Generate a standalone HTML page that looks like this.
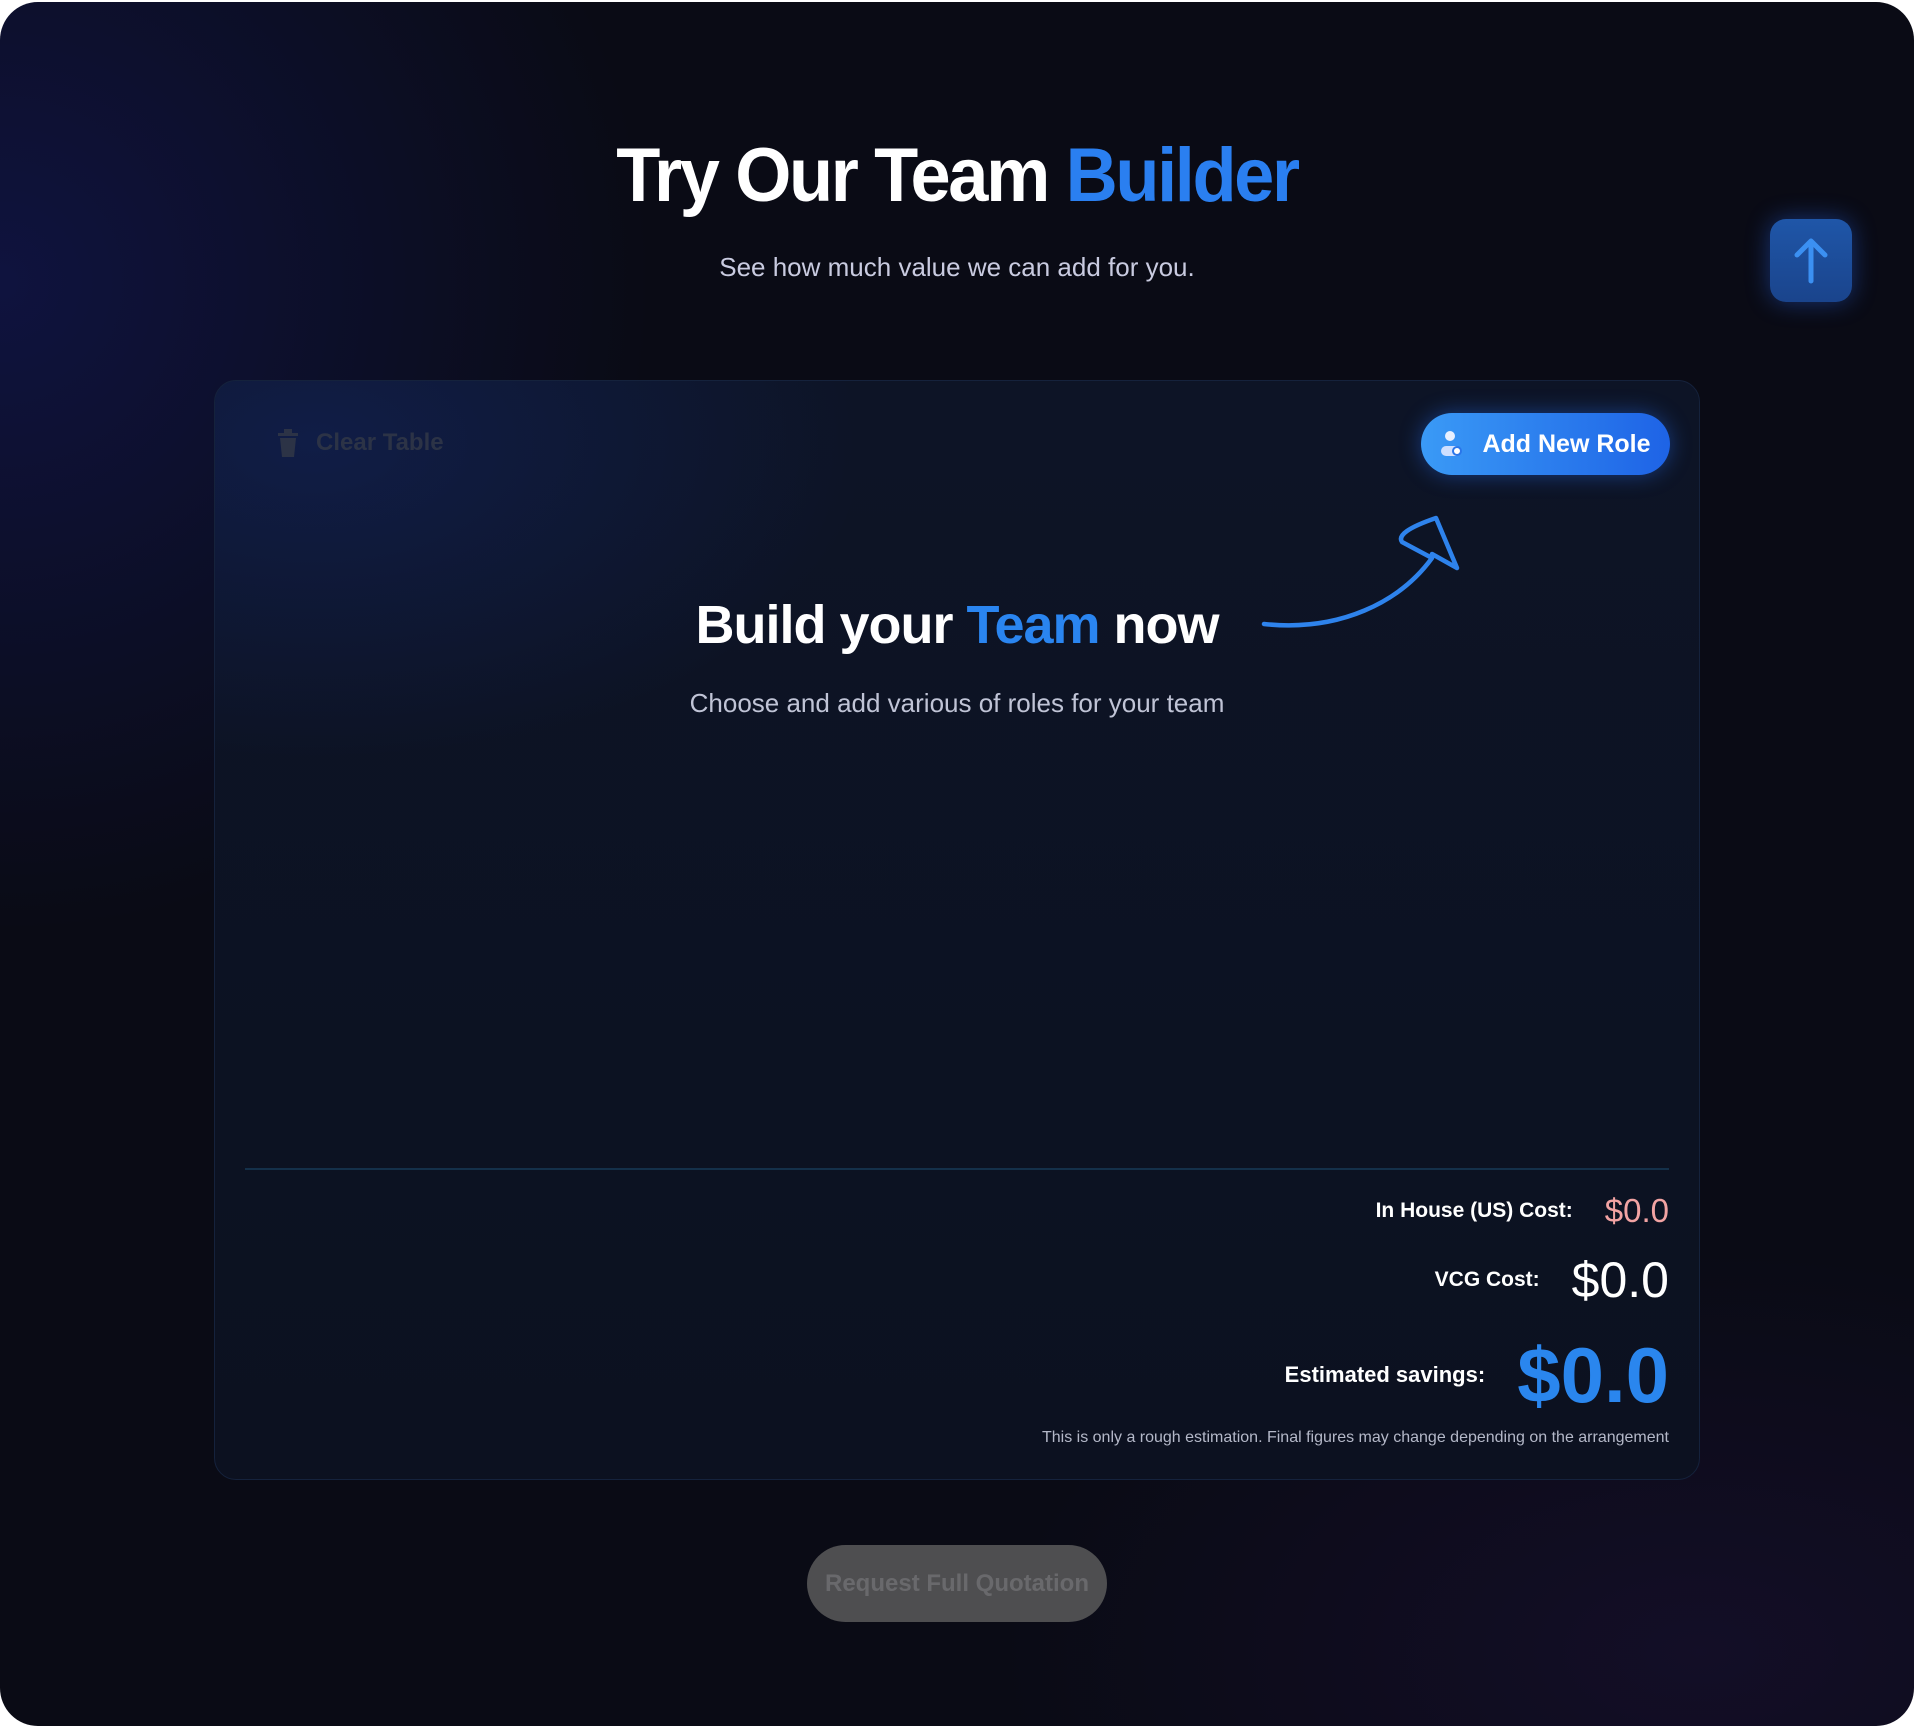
<!DOCTYPE html>
<html><head><meta charset="utf-8"><style>
*{margin:0;padding:0;box-sizing:border-box}
html,body{width:1914px;height:1729px;background:#fff;overflow:hidden;font-family:"Liberation Sans",Arial,sans-serif}
.page{position:absolute;left:0;top:2px;width:1914px;height:1724px;border-radius:38px;overflow:hidden;
background:radial-gradient(ellipse 650px 650px at 0px 280px,rgba(22,30,120,.42),rgba(10,11,22,0) 100%),radial-gradient(ellipse 700px 400px at 1700px 1650px,rgba(40,20,80,.3),rgba(0,0,0,0)),#0a0b15}
.abs{position:absolute}
h1{position:absolute;left:0;width:1914px;top:130px;text-align:center;font-size:76px;font-weight:bold;color:#fff;letter-spacing:-2.5px;transform:scaleX(.95)}
.sub{position:absolute;left:0;width:1914px;top:250px;text-align:center;font-size:26px;color:#c9cbe0}
.up{left:1770px;top:217px;width:82px;height:83px;border-radius:16px;background:linear-gradient(180deg,#1f56a8,#1a448c);box-shadow:0 0 24px rgba(40,100,230,.45)}
.card{left:214px;top:378px;width:1486px;height:1100px;border-radius:22px;border:1px solid #15223c;
background:radial-gradient(ellipse 550px 320px at 100px 60px,rgba(20,40,110,.45),rgba(0,0,0,0)),linear-gradient(180deg,#0d1426,#0c1120)}
.clear{left:61px;top:48px;font-size:24px;color:#2c3346;font-weight:bold;display:flex;align-items:center;gap:16px}
.add{left:1206px;top:32px;width:249px;height:62px;border-radius:31px;background:linear-gradient(90deg,#3a9af6,#1e63e6);box-shadow:0 0 22px rgba(40,110,240,.45);color:#fff;font-size:25px;font-weight:bold;display:flex;align-items:center;justify-content:center;gap:18px}
.build{left:0;width:1914px;top:592px;text-align:center;font-size:54px;font-weight:bold;color:#fff;letter-spacing:-1px}
.choose{left:0;width:1914px;top:686px;text-align:center;font-size:26px;color:#c0c4d6}
.row{right:245px;display:flex;align-items:center;justify-content:flex-end;font-weight:bold;color:#fff}
</style></head><body><div class="page">
<h1>Try Our Team <span style="color:#2a7ff0">Builder</span></h1>
<div class="sub">See how much value we can add for you.</div>
<div class="abs up"><svg width="82" height="83" viewBox="0 0 82 83"><path d="M41 62V22M27 36L41 22L55 36" stroke="#3b90f2" stroke-width="5" fill="none" stroke-linecap="round" stroke-linejoin="round"/></svg></div>
<div class="abs card">
<div class="abs clear"><svg width="24" height="28" viewBox="0 0 24 28"><rect x="2" y="4" width="20" height="3" fill="#2c3346"/><rect x="8" y="0" width="8" height="4" fill="#2c3346"/><path d="M4 9h16l-2 19H6z" fill="#2c3346"/></svg><span>Clear Table</span></div>
<div class="abs add"><svg width="24" height="28" viewBox="0 0 24 28"><circle cx="10" cy="6" r="5" fill="#e8f0ff"/><rect x="1" y="16" width="20" height="10" rx="5" fill="#cfe0ff"/><circle cx="17" cy="21" r="4" fill="#fff" stroke="#2a76ea" stroke-width="2"/></svg><span>Add New Role</span></div>
<div class="abs" style="left:0;right:0;top:787px;height:2px;margin:0 30px;background:#14304a"></div>
</div>
<div class="abs build">Build your <span style="color:#2a85f0">Team</span> now</div>
<div class="abs choose">Choose and add various of roles for your team</div>
<svg class="abs" style="left:0;top:0" width="1914" height="1729"><path d="M1264 622 C1340 630 1400 600 1432 556 M1432 556 L1402 540 Q1395 530 1436 516 L1457 566 L1432 552" stroke="#2e83ec" stroke-width="4.5" fill="none" stroke-linecap="round" stroke-linejoin="round"/></svg>
<div class="abs row" style="top:1192px;height:34px"><span style="font-size:21px">In House (US) Cost:</span><span style="font-size:33px;color:#f2a3a3;margin-left:32px;font-weight:normal">$0.0</span></div>
<div class="abs row" style="top:1250px;height:56px"><span style="font-size:21px">VCG Cost:</span><span style="font-size:50px;margin-left:32px;font-weight:normal">$0.0</span></div>
<div class="abs row" style="top:1328px;height:90px"><span style="font-size:22px">Estimated savings:</span><span style="font-size:78px;color:#2a86ee;margin-left:32px">$0.0</span></div>
<div class="abs" style="right:245px;top:1427px;font-size:16px;color:#b4b8c8">This is only a rough estimation. Final figures may change depending on the arrangement</div>
<div class="abs" style="left:807px;top:1543px;width:300px;height:77px;border-radius:39px;background:#4e4e50;color:#69696c;font-size:24px;font-weight:bold;display:flex;align-items:center;justify-content:center">Request Full Quotation</div>
</div></body></html>
